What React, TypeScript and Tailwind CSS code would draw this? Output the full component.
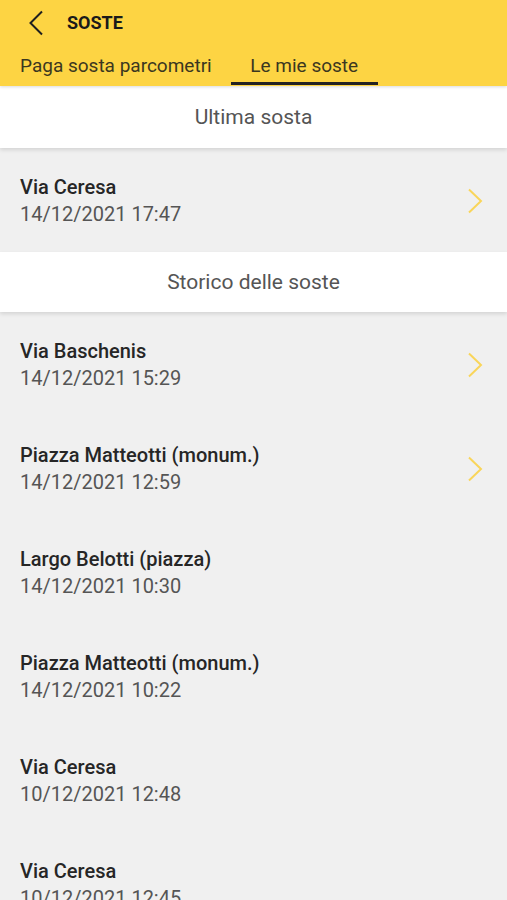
const history = [
  { place: 'Via Baschenis', when: '14/12/2021 15:29', more: true },
  { place: 'Piazza Matteotti (monum.)', when: '14/12/2021 12:59', more: true },
  { place: 'Largo Belotti (piazza)', when: '14/12/2021 10:30', more: false },
  { place: 'Piazza Matteotti (monum.)', when: '14/12/2021 10:22', more: false },
  { place: 'Via Ceresa', when: '10/12/2021 12:48', more: false },
  { place: 'Via Ceresa', when: '10/12/2021 12:45', more: false },
];

function Chevron() {
  return (
    <svg width="16" height="26" viewBox="0 0 16 26" fill="none">
      <path d="M2 1.5 L14 13 L2 24.5" stroke="#F9D55A" strokeWidth="2" />
    </svg>
  );
}

function Row({ place, when, more }: { place: string; when: string; more: boolean }) {
  return (
    <div className="flex h-[104px] shrink-0 items-center justify-between pl-5 pr-6 pt-[2px] bg-[#f0f0f0]">
      <div className="flex flex-col">
        <div className="text-[20px] leading-[27px] font-medium text-[#262626]">{place}</div>
        <div className="text-[20px] leading-[27px] text-[#555555]">{when}</div>
      </div>
      {more && <Chevron />}
    </div>
  );
}

function Section({ title, h }: { title: string; h: string }) {
  return (
    <div className={`relative z-10 flex shrink-0 items-center justify-center bg-white pt-[2px] shadow-[0_2px_4px_rgba(0,0,0,0.12)] ${h}`}>
      <span className="text-[21px] text-[#555555]">{title}</span>
    </div>
  );
}

export default function App() {
  return (
    <div className="flex h-[900px] flex-col overflow-hidden bg-[#f0f0f0] font-['Roboto',sans-serif]">
      <header className="relative z-20 shrink-0 bg-[#FDD443] shadow-[0_1px_3px_rgba(0,0,0,0.15)]">
        <div className="flex h-[45px] items-center">
          <div className="flex w-[67px] justify-center pl-1">
            <svg width="16" height="26" viewBox="0 0 16 26" fill="none">
              <path d="M14 1.5 L2.5 13 L14 24.5" stroke="#1f1f1f" strokeWidth="2" />
            </svg>
          </div>
          <div className="text-[18px] font-bold text-[#1a1a1a]">SOSTE</div>
        </div>
        <div className="flex h-[41px] pl-5">
          <div className="pt-[9px] text-[19px] leading-[24px] text-[#3b3720]">Paga sosta parcometri</div>
          <div className="ml-[19px] flex w-[147px] flex-col items-center justify-between">
            <div className="pt-[9px] text-[19px] leading-[24px] text-[#3b3720]">Le mie soste</div>
            <div className="mb-[1px] h-[3px] w-full bg-[#222222]" />
          </div>
        </div>
      </header>
      <Section title="Ultima sosta" h="h-[62px]" />
      <Row place="Via Ceresa" when="14/12/2021 17:47" more />
      <Section title="Storico delle soste" h="h-[60px]" />
      {history.map((r, i) => (
        <Row key={i} place={r.place} when={r.when} more={r.more} />
      ))}
    </div>
  );
}
